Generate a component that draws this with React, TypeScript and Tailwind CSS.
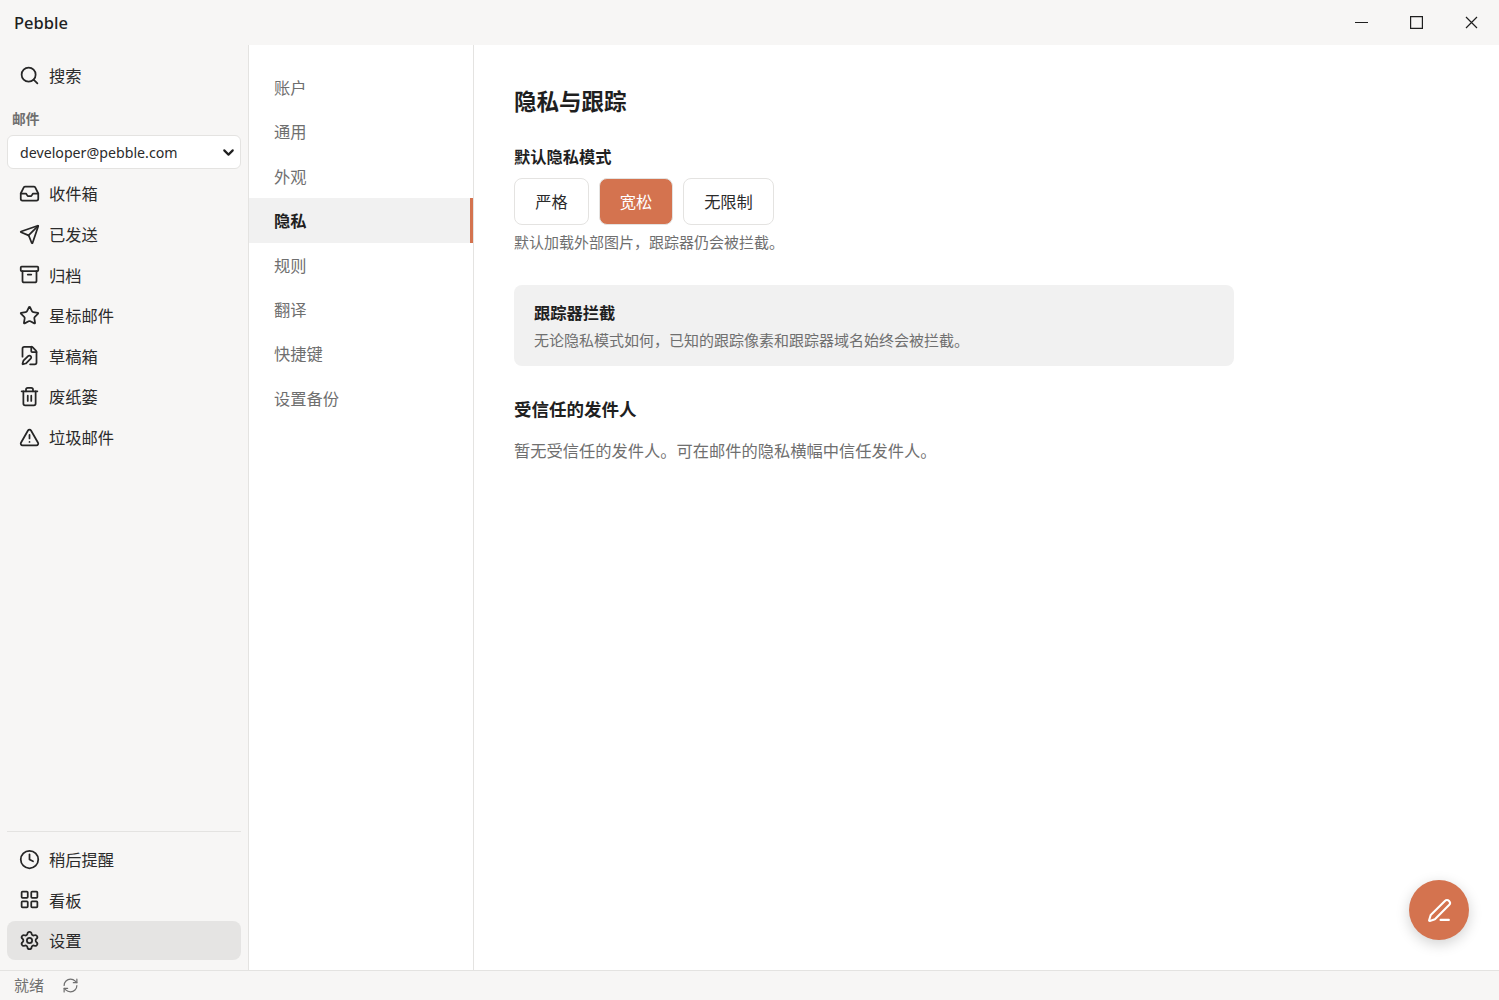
import React from 'react';
import {
  Search, Inbox, Send, Archive, Star, FilePen, Trash2, TriangleAlert, Clock, LayoutGrid, Settings,
  RefreshCw, PenLine, ChevronDown,
} from 'lucide-react';

const FONT = 'font-["Noto_Sans","Noto_Sans_CJK_SC",sans-serif]';

const mailItems = [
  { icon: Inbox, label: '收件箱' },
  { icon: Send, label: '已发送' },
  { icon: Archive, label: '归档' },
  { icon: Star, label: '星标邮件' },
  { icon: FilePen, label: '草稿箱' },
  { icon: Trash2, label: '废纸篓' },
  { icon: TriangleAlert, label: '垃圾邮件' },
];

const bottomItems = [
  { icon: Clock, label: '稍后提醒' },
  { icon: LayoutGrid, label: '看板' },
  { icon: Settings, label: '设置', active: true },
];

const settingsNav = ['账户', '通用', '外观', '隐私', '规则', '翻译', '快捷键', '设置备份'];

const NavRow: React.FC<{ icon: React.ElementType; label: string; active?: boolean }> = ({ icon: Icon, label, active }) => (
  <div className={`flex h-[39px] items-center gap-[9.5px] rounded-lg pl-[11.5px] text-[16.25px] text-[#2b2b2b] ${active ? 'bg-[#e5e4e3]' : ''}`}>
    <Icon className="h-[21px] w-[21px] text-[#262626]" strokeWidth={2} />
    <span className="pt-[2px]">{label}</span>
  </div>
);

export default function App() {
  return (
    <div className={`flex h-[1000px] w-[1499px] flex-col overflow-hidden bg-[#f7f6f5] ${FONT}`}>
      <header className="flex h-[45px] shrink-0 items-center justify-between">
        <span className="pl-[14px] pt-[2px] text-[16.5px] font-medium text-[#1f1f1f]">Pebble</span>
        <div className="flex text-[#1f1f1f]">
          <div className="flex h-[45px] w-[55px] items-center justify-center">
            <svg width="13" height="13" viewBox="0 0 13 13" fill="none" stroke="currentColor" strokeWidth="1"><path d="M0 6.5h13" /></svg>
          </div>
          <div className="flex h-[45px] w-[55px] items-center justify-center">
            <svg width="13" height="13" viewBox="0 0 13 13" fill="none" stroke="currentColor" strokeWidth="1.2"><path d="M.6.6h11.8v11.8H.6z" /></svg>
          </div>
          <div className="flex h-[45px] w-[55px] items-center justify-center">
            <svg width="13" height="13" viewBox="0 0 13 13" fill="none" stroke="currentColor" strokeWidth="1.2"><path d="M1 1l11 11M12 1L1 12" /></svg>
          </div>
        </div>
      </header>

      <div className="flex min-h-0 flex-1">
        <aside className="flex w-[249px] shrink-0 flex-col border-r border-[#e4e3e1] px-[7px] pb-[10px] pt-[11px]">
          <NavRow icon={Search} label="搜索" />
          <div className="mt-[15px] pl-[5px] text-[13.75px] font-bold leading-[18px] text-[#6f6f6f]">邮件</div>
          <div className="mt-[7px] flex h-[34px] items-center justify-between rounded-md border border-[#e4e3e1] bg-white pl-[12px] pr-[3px] text-[14.2px] text-[#2b2b2b]">
            <span className="pt-[2px]">developer@pebble.com</span>
            <ChevronDown className="h-[17px] w-[17px] text-[#1f1f1f]" strokeWidth={3} />
          </div>
          <nav className="mt-[5px] flex flex-col gap-[1.6px]">
            {mailItems.map((item) => (
              <NavRow key={item.label} icon={item.icon} label={item.label} />
            ))}
          </nav>
          <div className="mt-auto flex flex-col gap-[1.6px] border-t border-[#e4e3e1] pt-[8px]">
            {bottomItems.map((item) => (
              <NavRow key={item.label} icon={item.icon} label={item.label} active={item.active} />
            ))}
          </div>
        </aside>

        <nav className="flex w-[225px] shrink-0 flex-col border-r border-[#e4e3e1] bg-white pt-[20px]">
          {settingsNav.map((label) => (
            <div
              key={label}
              className={`flex h-[44.4px] items-center pl-[25px] pt-[2px] text-[16.25px] ${
                label === '隐私'
                  ? 'border-r-[3px] border-[#d4734f] bg-[#f1f1f1] font-bold text-[#1f1f1f]'
                  : 'text-[#6f6f6f]'
              }`}
            >
              {label}
            </div>
          ))}
        </nav>

        <main className="relative min-w-0 flex-1 bg-white pl-[40px] pt-[40px]">
          <h1 className="text-[22.5px] font-bold leading-[34px] text-[#1f1f1f]">隐私与跟踪</h1>
          <h2 className="mt-[26px] text-[16.25px] font-bold leading-[24px] text-[#1f1f1f]">默认隐私模式</h2>
          <div className="mt-[9px] flex gap-[10px]">
            <button className="h-[47px] w-[75px] rounded-lg border border-[#e4e3e1] bg-white pt-[2px] text-[16.25px] text-[#2b2b2b]">严格</button>
            <button className="h-[47px] w-[74px] rounded-lg border border-[#e4e3e1] bg-[#d4734f] pt-[2px] text-[16.25px] text-white">宽松</button>
            <button className="h-[47px] w-[91px] rounded-lg border border-[#e4e3e1] bg-white pt-[2px] text-[16.25px] text-[#2b2b2b]">无限制</button>
          </div>
          <p className="mt-[6px] text-[15px] leading-[22px] text-[#6f6f6f]">{'默认加载外部图片\uFF0C跟踪器仍会被拦截。'}</p>
          <div className="mt-[32px] h-[81px] w-[720px] rounded-lg bg-[#f1f1f1] px-[20px] pt-[16px]">
            <div className="text-[16.25px] font-bold leading-[24px] text-[#1f1f1f]">跟踪器拦截</div>
            <div className="mt-[4px] text-[15px] leading-[22px] text-[#6f6f6f]">{'无论隐私模式如何\uFF0C已知的跟踪像素和跟踪器域名始终会被拦截。'}</div>
          </div>
          <h2 className="mt-[29px] text-[17.5px] font-bold leading-[28px] text-[#1f1f1f]">受信任的发件人</h2>
          <p className="mt-[15px] text-[16.25px] leading-[26px] text-[#6f6f6f]">暂无受信任的发件人。可在邮件的隐私横幅中信任发件人。</p>

          <button className="absolute bottom-[30px] right-[30px] flex h-[60px] w-[60px] items-center justify-center rounded-full bg-[#d4734f] text-white shadow-[0_4px_14px_rgba(0,0,0,0.18)]">
            <PenLine className="h-[25px] w-[25px]" strokeWidth={2} />
          </button>
        </main>
      </div>

      <footer className="flex h-[30px] shrink-0 items-center gap-[18px] border-t border-[#e4e3e1] pl-[14px] text-[15px] text-[#6f6f6f]">
        <span>就绪</span>
        <RefreshCw className="h-[17px] w-[17px]" strokeWidth={1.7} />
      </footer>
    </div>
  );
}
